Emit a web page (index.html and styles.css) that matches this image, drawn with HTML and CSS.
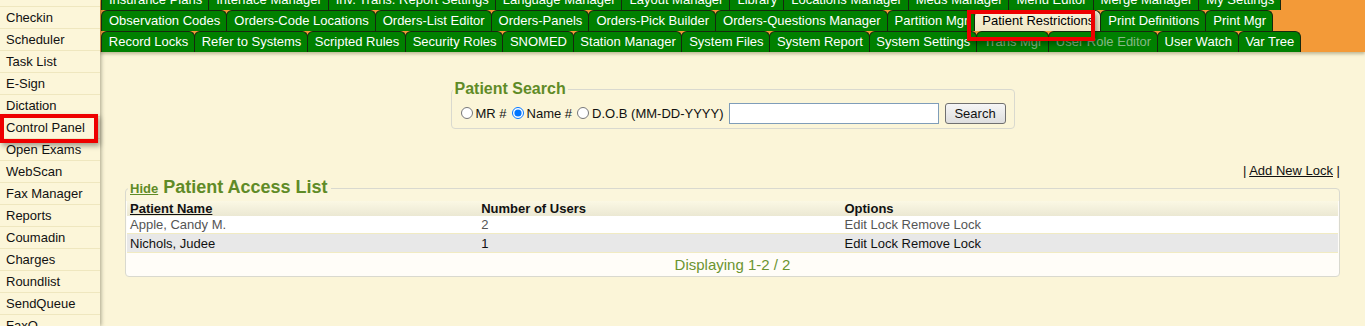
FILE: index.html
```html
<!DOCTYPE html>
<html lang="en">
<head>
    <meta charset="UTF-8">
    <meta name="viewport" content="width=device-width, initial-scale=1.0">
    <title>Patient Restrictions</title>
    <link rel="stylesheet" href="styles.css">
</head>
<body>
    <div class="app">
        <nav class="sidebar">
            <ul class="menu">
                <li>Checkin</li>
                <li>Scheduler</li>
                <li>Task List</li>
                <li>E-Sign</li>
                <li>Dictation</li>
                <li>Control Panel</li>
                <li>Open Exams</li>
                <li>WebScan</li>
                <li>Fax Manager</li>
                <li>Reports</li>
                <li>Coumadin</li>
                <li>Charges</li>
                <li>Roundlist</li>
                <li>SendQueue</li>
                <li>FaxQ</li>
            </ul>
        </nav>

        <div class="main">
            <div class="tabs">
                <div class="tab-row">
                    <span class="tab">Insurance Plans</span>
                    <span class="tab">Interface Manager</span>
                    <span class="tab">Inv. Trans. Report Settings</span>
                    <span class="tab">Language Manager</span>
                    <span class="tab">Layout Manager</span>
                    <span class="tab">Library</span>
                    <span class="tab">Locations Manager</span>
                    <span class="tab">Meds Manager</span>
                    <span class="tab">Menu Editor</span>
                    <span class="tab">Merge Manager</span>
                    <span class="tab">My Settings</span>
                </div>
                <div class="tab-row">
                    <span class="tab">Observation Codes</span>
                    <span class="tab">Orders-Code Locations</span>
                    <span class="tab">Orders-List Editor</span>
                    <span class="tab">Orders-Panels</span>
                    <span class="tab">Orders-Pick Builder</span>
                    <span class="tab">Orders-Questions Manager</span>
                    <span class="tab">Partition Mgr</span>
                    <span class="tab active">Patient Restrictions</span>
                    <span class="tab">Print Definitions</span>
                    <span class="tab">Print Mgr</span>
                </div>
                <div class="tab-row tight">
                    <span class="tab">Record Locks</span>
                    <span class="tab">Refer to Systems</span>
                    <span class="tab">Scripted Rules</span>
                    <span class="tab">Security Roles</span>
                    <span class="tab">SNOMED</span>
                    <span class="tab">Station Manager</span>
                    <span class="tab">System Files</span>
                    <span class="tab">System Report</span>
                    <span class="tab">System Settings</span>
                    <span class="tab dim">Trans Mgr</span>
                    <span class="tab dim">User Role Editor</span>
                    <span class="tab">User Watch</span>
                    <span class="tab">Var Tree</span>
                </div>
            </div>

            <div class="content">
                <fieldset class="search-box">
                    <legend>Patient Search</legend>
                    <div class="search-row">
                        <label><input type="radio" name="by"> MR #</label>
                        <label><input type="radio" name="by" checked> Name #</label>
                        <label><input type="radio" name="by"> D.O.B (MM-DD-YYYY)</label>
                        <input type="text" class="search-input">
                        <button type="button">Search</button>
                    </div>
                </fieldset>

                <div class="actions">| <a href="#">Add New Lock</a> |</div>

                <fieldset class="list-box">
                    <legend><a href="#" class="hide-link">Hide</a> Patient Access List</legend>
                    <table class="locks">
                        <thead>
                            <tr>
                                <th class="c1"><u>Patient Name</u></th>
                                <th class="c2">Number of Users</th>
                                <th>Options</th>
                            </tr>
                        </thead>
                        <tbody>
                            <tr class="odd">
                                <td>Apple, Candy M.</td>
                                <td>2</td>
                                <td>Edit Lock Remove Lock</td>
                            </tr>
                            <tr class="even">
                                <td>Nichols, Judee</td>
                                <td>1</td>
                                <td>Edit Lock Remove Lock</td>
                            </tr>
                        </tbody>
                    </table>
                    <div class="paging">Displaying 1-2 / 2</div>
                </fieldset>
            </div>
        </div>
    </div>

    <div class="mark mark-panel"></div>
    <div class="mark mark-tab"></div>
</body>
</html>
```

FILE: styles.css
```css
body {
    margin: 0;
    height: 326px;
    overflow: hidden;
    font-family: "Liberation Sans", Arial, sans-serif;
    font-size: 13px;
    color: #111;
    background-color: #fbf5d8;
}

.app {
    display: flex;
    height: 100%;
}

/* left menu */
.sidebar {
    position: relative;
    z-index: 2;
    width: 100px;
    flex-shrink: 0;
    padding-top: 6px;
    background-color: #fcf6d9;
    box-shadow: 1px 0 4px rgba(60, 60, 40, 0.45);
}

.menu {
    list-style: none;
    margin: 0;
    padding: 0;
    border-top: 1px solid #efe7bf;
}

.menu li {
    height: 21px;
    line-height: 21px;
    padding-left: 6px;
    border-bottom: 1px solid #efe7bf;
    white-space: nowrap;
}

/* tab strip */
.main {
    flex: 1;
    min-width: 0;
}

.tabs {
    margin-top: -11px;
    padding-left: 1px;
    background-color: #f39a38;
    box-shadow: 0 2px 3px rgba(80, 70, 30, 0.35);
    position: relative;
    z-index: 1;
}

.tab-row {
    display: flex;
    height: 21px;
}

.tab {
    box-sizing: border-box;
    height: 21px;
    line-height: 20px;
    padding: 0 6px 0 7px;
    margin-right: -1px;
    border: 1px solid #16280e;
    border-bottom: none;
    border-radius: 6px 6px 0 0;
    background-color: #008000;
    color: #fff;
    white-space: nowrap;
}

.tab-row.tight .tab {
    padding: 0 5.6px 0 6.8px;
}

.tab.active {
    background: linear-gradient(#fbf4da, #efe6c4);
    color: #000;
}

.tab.dim {
    color: #86b886;
}

/* page body */
.content {
    padding: 0 25px;
}

fieldset {
    margin: 0;
    border: 1px solid #d9d9cf;
    border-radius: 4px;
}

.search-box {
    width: 564px;
    box-sizing: border-box;
    margin: 28px auto 0;
    padding: 3px 4px 3px 4px;
}

.search-box legend {
    padding: 0 2px;
    margin-left: -3px;
    font-size: 16px;
    font-weight: bold;
    color: #5f8b27;
    line-height: 18px;
}

.search-row {
    display: flex;
    align-items: center;
    height: 24px;
}

.search-row label {
    display: flex;
    align-items: center;
    white-space: nowrap;
}

.search-row input[type="radio"] {
    width: 12px;
    height: 12px;
    margin: 0 3px 0 5px;
}

.search-input {
    width: 210px;
    height: 21px;
    box-sizing: border-box;
    margin-left: 5px;
    border: 1px solid #7f9db9;
    padding: 1px 3px;
    background: #fff;
}

button {
    height: 21px;
    width: 61px;
    margin-left: 6px;
    padding: 0;
    font-family: inherit;
    font-size: 13px;
    color: #111;
    background: linear-gradient(#f6f6f6, #dedede);
    border: 1px solid #707070;
    border-radius: 3px;
}

.actions {
    margin-top: 34px;
    text-align: right;
    line-height: 16px;
}

.actions a {
    color: #111;
}

.list-box {
    margin-top: -2px;
    padding: 2px 1px 0 1px;
    background: linear-gradient(#fbf6dc 12px, #fffdf8 12px);
}

.list-box legend {
    padding: 0 3px 0 2px;
    margin-left: 1px;
    font-size: 18px;
    font-weight: bold;
    color: #5f8b27;
    line-height: 21px;
}

.hide-link {
    font-size: 13px;
    color: #5f8b27;
}

.locks {
    width: 100%;
    border-collapse: collapse;
}

.locks th {
    text-align: left;
    padding: 0 3px;
    height: 15px;
    line-height: 15px;
    background: linear-gradient(#fbf8e4, #ebe8d3);
}

.locks .c1 {
    width: 29%;
}

.locks .c2 {
    width: 30%;
}

.locks td {
    padding: 0 3px;
    height: 17px;
    line-height: 17px;
    border-bottom: 1px solid #f1ebc3;
}

.locks .odd td {
    background-color: #fff;
    color: #555;
}

.locks .even td {
    background-color: #e8e8e8;
    height: 18px;
    border-top: 1px solid #f1ebc3;
}

.paging {
    text-align: center;
    font-size: 15px;
    line-height: 18px;
    padding: 3px 0 2px;
    color: #6b9430;
}

/* red highlight boxes over the screenshot */
.mark {
    position: absolute;
    border: 4px solid #ee0000;
    box-shadow: 2px 3px 5px rgba(0, 0, 0, 0.35);
    z-index: 5;
}

.mark-panel {
    left: 0;
    top: 114px;
    width: 90px;
    height: 21px;
}

.mark-tab {
    left: 967px;
    top: 10px;
    width: 120px;
    height: 23px;
}
```
